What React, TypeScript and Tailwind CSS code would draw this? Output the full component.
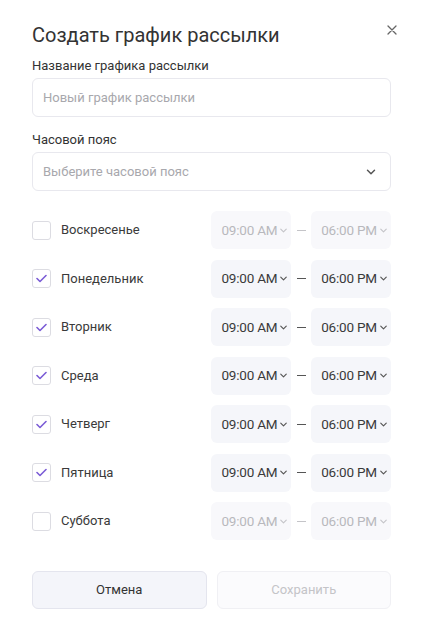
import { ChevronDown } from "lucide-react";

const days = [
  { name: "Воскресенье", on: false },
  { name: "Понедельник", on: true },
  { name: "Вторник", on: true },
  { name: "Среда", on: true },
  { name: "Четверг", on: true },
  { name: "Пятница", on: true },
  { name: "Суббота", on: false },
];

const TimeSelect = ({ value, on }: { value: string; on: boolean }) => (
  <div
    className={`flex items-center h-[38px] w-[80px] rounded-md pl-[10px] text-[13.5px] ${
      on ? "bg-[#f5f6fa] text-[#3a3a3a]" : "bg-[#f8f8fb] text-[#b8b8bd]"
    }`}
  >
    <span className="tracking-[-0.2px]">{value}</span>
    <ChevronDown
      size={11}
      strokeWidth={2.5}
      className={`ml-[1px] ${on ? "text-[#555]" : "text-[#c4c4c8]"}`}
    />
  </div>
);

export default function App() {
  return (
    <div
      className="min-h-[631px] w-[427px] bg-white"
      style={{ fontFamily: "Roboto, 'Liberation Sans', sans-serif" }}
    >
      <div className="pl-8 pr-9 pt-[21px]">
        {/* Header */}
        <div className="flex items-start justify-between">
          <h1 className="text-[20px] leading-[28px] text-[#333]">
            Создать график рассылки
          </h1>
          <button className="mt-[4px] mr-[-6px] text-[#666]">
            <svg width="10" height="10" viewBox="0 0 10 10" fill="none">
              <path
                d="M1 1l8 8M9 1l-8 8"
                stroke="currentColor"
                strokeWidth="1.3"
                strokeLinecap="round"
              />
            </svg>
          </button>
        </div>

        {/* Name */}
        <div className="mt-[8px] text-[13px] leading-[18px] text-[#333]">
          Название графика рассылки
        </div>
        <div className="mt-[3px] flex h-[39px] items-center rounded-md border border-[#e8e8ee] px-[10px] text-[13px] text-[#a8a8ad]">
          Новый график рассылки
        </div>

        {/* Timezone */}
        <div className="mt-[14px] text-[13px] leading-[18px] text-[#333]">
          Часовой пояс
        </div>
        <div className="mt-[3px] flex h-[39px] items-center justify-between rounded-md border border-[#e8e8ee] pl-[10px] pr-[12px] text-[13px] text-[#a8a8ad]">
          <span>Выберите часовой пояс</span>
          <ChevronDown size={14} strokeWidth={2.5} className="text-[#555]" />
        </div>

        {/* Days */}
        <div className="mt-[20px] flex flex-col gap-[10.5px]">
          {days.map((d) => (
            <div key={d.name} className="flex items-center">
              <div className="flex w-[180px] items-center">
                <div className="flex h-[19px] w-[19px] items-center justify-center rounded-[3px] border border-[#dcdce2] bg-white">
                  {d.on && (
                    <svg width="11" height="9" viewBox="0 0 11 9" fill="none">
                      <path
                        d="M1 4.5l3 3L10 1.5"
                        stroke="#7b5cd6"
                        strokeWidth="1.6"
                        strokeLinecap="round"
                        strokeLinejoin="round"
                      />
                    </svg>
                  )}
                </div>
                <span className="ml-[10px] text-[13px] text-[#3a3a3a]">
                  {d.name}
                </span>
              </div>
              <TimeSelect value="09:00 AM" on={d.on} />
              <div className="flex w-[20px] justify-center">
                <div
                  className={`h-px w-[9px] ${
                    d.on ? "bg-[#555]" : "bg-[#c4c4c8]"
                  }`}
                />
              </div>
              <TimeSelect value="06:00 PM" on={d.on} />
            </div>
          ))}
        </div>

        {/* Buttons */}
        <div className="mt-[31px] flex gap-[10px]">
          <button className="h-[38px] flex-1 rounded-md border border-[#e4e5ee] bg-[#f4f5fa] text-[13px] text-[#333]">
            Отмена
          </button>
          <button className="h-[38px] flex-1 rounded-md border border-[#f0f0f4] bg-[#fbfbfd] text-[13px] text-[#c4c4c8]">
            Сохранить
          </button>
        </div>
      </div>
    </div>
  );
}
